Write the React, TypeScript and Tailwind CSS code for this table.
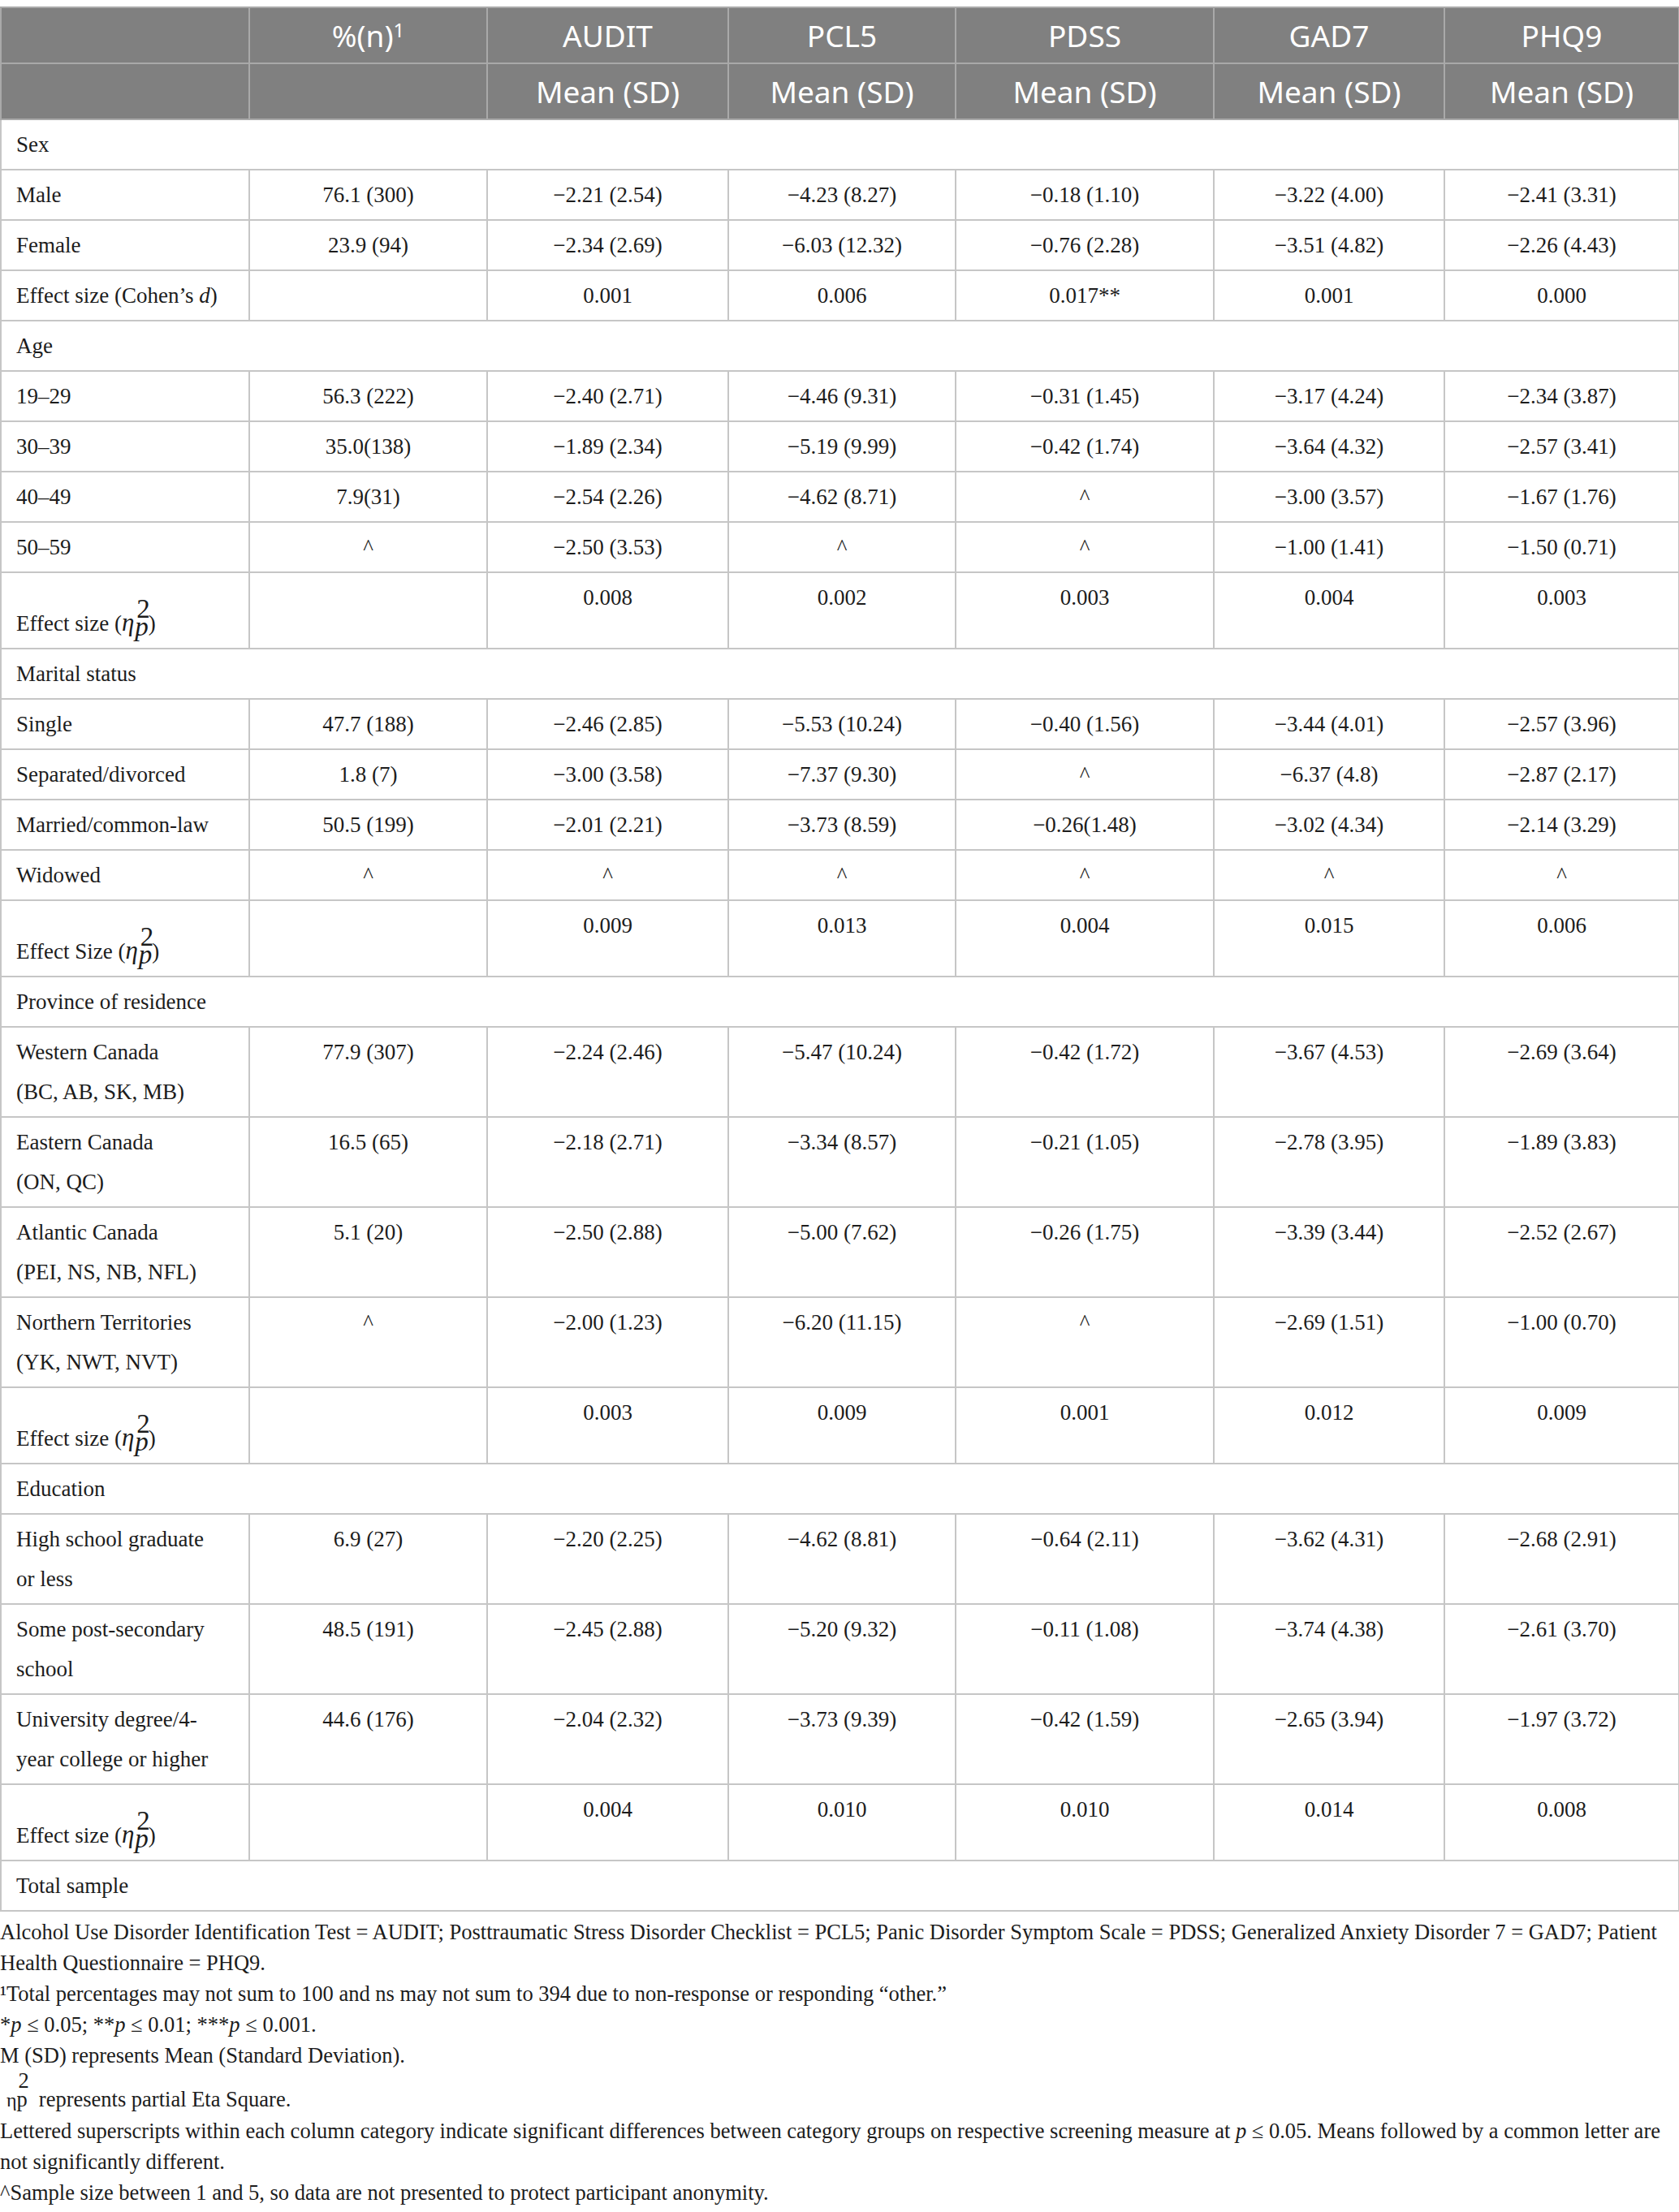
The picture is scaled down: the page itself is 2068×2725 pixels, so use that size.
const rows: any[] = [
  { section: "Sex" },
  { label: "Male", n: "76.1 (300)", v: ["−2.21 (2.54)", "−4.23 (8.27)", "−0.18 (1.10)", "−3.22 (4.00)", "−2.41 (3.31)"] },
  { label: "Female", n: "23.9 (94)", v: ["−2.34 (2.69)", "−6.03 (12.32)", "−0.76 (2.28)", "−3.51 (4.82)", "−2.26 (4.43)"] },
  { cohen: true, v: ["0.001", "0.006", "0.017**", "0.001", "0.000"] },
  { section: "Age" },
  { label: "19–29", n: "56.3 (222)", v: ["−2.40 (2.71)", "−4.46 (9.31)", "−0.31 (1.45)", "−3.17 (4.24)", "−2.34 (3.87)"] },
  { label: "30–39", n: "35.0(138)", v: ["−1.89 (2.34)", "−5.19 (9.99)", "−0.42 (1.74)", "−3.64 (4.32)", "−2.57 (3.41)"] },
  { label: "40–49", n: "7.9(31)", v: ["−2.54 (2.26)", "−4.62 (8.71)", "^", "−3.00 (3.57)", "−1.67 (1.76)"] },
  { label: "50–59", n: "^", v: ["−2.50 (3.53)", "^", "^", "−1.00 (1.41)", "−1.50 (0.71)"] },
  { eta: "Effect size", v: ["0.008", "0.002", "0.003", "0.004", "0.003"] },
  { section: "Marital status" },
  { label: "Single", n: "47.7 (188)", v: ["−2.46 (2.85)", "−5.53 (10.24)", "−0.40 (1.56)", "−3.44 (4.01)", "−2.57 (3.96)"] },
  { label: "Separated/divorced", n: "1.8 (7)", v: ["−3.00 (3.58)", "−7.37 (9.30)", "^", "−6.37 (4.8)", "−2.87 (2.17)"] },
  { label: "Married/common-law", n: "50.5 (199)", v: ["−2.01 (2.21)", "−3.73 (8.59)", "−0.26(1.48)", "−3.02 (4.34)", "−2.14 (3.29)"] },
  { label: "Widowed", n: "^", v: ["^", "^", "^", "^", "^"] },
  { eta: "Effect Size", v: ["0.009", "0.013", "0.004", "0.015", "0.006"] },
  { section: "Province of residence" },
  { label: "Western Canada", label2: "(BC, AB, SK, MB)", n: "77.9 (307)", v: ["−2.24 (2.46)", "−5.47 (10.24)", "−0.42 (1.72)", "−3.67 (4.53)", "−2.69 (3.64)"] },
  { label: "Eastern Canada", label2: "(ON, QC)", n: "16.5 (65)", v: ["−2.18 (2.71)", "−3.34 (8.57)", "−0.21 (1.05)", "−2.78 (3.95)", "−1.89 (3.83)"] },
  { label: "Atlantic Canada", label2: "(PEI, NS, NB, NFL)", n: "5.1 (20)", v: ["−2.50 (2.88)", "−5.00 (7.62)", "−0.26 (1.75)", "−3.39 (3.44)", "−2.52 (2.67)"] },
  { label: "Northern Territories", label2: "(YK, NWT, NVT)", n: "^", v: ["−2.00 (1.23)", "−6.20 (11.15)", "^", "−2.69 (1.51)", "−1.00 (0.70)"] },
  { eta: "Effect size", v: ["0.003", "0.009", "0.001", "0.012", "0.009"] },
  { section: "Education" },
  { label: "High school graduate", label2: "or less", n: "6.9 (27)", v: ["−2.20 (2.25)", "−4.62 (8.81)", "−0.64 (2.11)", "−3.62 (4.31)", "−2.68 (2.91)"] },
  { label: "Some post-secondary", label2: "school", n: "48.5 (191)", v: ["−2.45 (2.88)", "−5.20 (9.32)", "−0.11 (1.08)", "−3.74 (4.38)", "−2.61 (3.70)"] },
  { label: "University degree/4-", label2: "year college or higher", n: "44.6 (176)", v: ["−2.04 (2.32)", "−3.73 (9.39)", "−0.42 (1.59)", "−2.65 (3.94)", "−1.97 (3.72)"] },
  { eta: "Effect size", v: ["0.004", "0.010", "0.010", "0.014", "0.008"] },
  { section: "Total sample" },
];

const measures = ["AUDIT", "PCL5", "PDSS", "GAD7", "PHQ9"];

const td = "border-2 border-[#c6c6c6] px-[18px] pt-[6px] pb-[5px] align-top";
const th = "border-2 border-[#a9a9a9] bg-[#808080] text-white font-normal text-[37px] leading-[49px] py-[9px] text-center";

const Eta = () => (
  <>
    <span className="italic text-[31px]">η</span>
    <span className="relative inline-block italic text-[33px] leading-none top-[6px] ml-[1px]">
      p
      <span className="absolute left-[2px] bottom-[22px] not-italic text-[33px] leading-none">2</span>
    </span>
  </>
);

const App = () => {
  return (
    <div className="w-[2068px] bg-white pt-[8px] text-[#1c1c1c] font-['Liberation_Serif',serif]">
      <table className="table-fixed border-collapse w-[2067px] text-[27px] leading-[49px]">
        <colgroup>
          <col className="w-[306px]" />
          <col className="w-[293px]" />
          <col className="w-[297px]" />
          <col className="w-[280px]" />
          <col className="w-[318px]" />
          <col className="w-[284px]" />
          <col className="w-[289px]" />
        </colgroup>
        <thead className="font-['Noto_Sans','Open_Sans',sans-serif]">
          <tr>
            <th className={th}></th>
            <th className={th}>
              %(n)<span className="relative top-[-12px] text-[24px] leading-none">1</span>
            </th>
            {measures.map((m) => (
              <th key={m} className={th}>{m}</th>
            ))}
          </tr>
          <tr>
            <th className={th}></th>
            <th className={th}></th>
            {measures.map((m) => (
              <th key={m} className={th}>Mean (SD)</th>
            ))}
          </tr>
        </thead>
        <tbody>
          {rows.map((r, i) => {
            if (r.section)
              return (
                <tr key={i}>
                  <td colSpan={7} className={td}>{r.section}</td>
                </tr>
              );
            if (r.eta)
              return (
                <tr key={i} className="h-[94px]">
                  <td className="border-2 border-[#c6c6c6] px-[18px] pb-[5px] align-bottom whitespace-nowrap">
                    {r.eta} (<Eta />)
                  </td>
                  <td className={td}></td>
                  {r.v.map((v: string, j: number) => (
                    <td key={j} className={td + " text-center"}>{v}</td>
                  ))}
                </tr>
              );
            if (r.cohen)
              return (
                <tr key={i}>
                  <td className={td + " whitespace-nowrap"}>
                    Effect size (Cohen’s <span className="italic">d</span>)
                  </td>
                  <td className={td}></td>
                  {r.v.map((v: string, j: number) => (
                    <td key={j} className={td + " text-center"}>{v}</td>
                  ))}
                </tr>
              );
            return (
              <tr key={i}>
                <td className={td}>
                  {r.label}
                  {r.label2 && (
                    <>
                      <br />
                      {r.label2}
                    </>
                  )}
                </td>
                <td className={td + " text-center"}>{r.n}</td>
                {r.v.map((v: string, j: number) => (
                  <td key={j} className={td + " text-center"}>{v}</td>
                ))}
              </tr>
            );
          })}
        </tbody>
      </table>

      <div className="mt-[6px] text-[26.5px] leading-[38px] pb-[10px]">
        <p>
          Alcohol Use Disorder Identification Test = AUDIT; Posttraumatic Stress Disorder Checklist = PCL5; Panic Disorder Symptom Scale = PDSS; Generalized Anxiety Disorder 7 = GAD7; Patient Health Questionnaire = PHQ9.
        </p>
        <p>¹Total percentages may not sum to 100 and ns may not sum to 394 due to non-response or responding “other.”</p>
        <p>
          *<span className="italic">p</span> ≤ 0.05; **<span className="italic">p</span> ≤ 0.01; ***<span className="italic">p</span> ≤ 0.001.
        </p>
        <p>M (SD) represents Mean (Standard Deviation).</p>
        <p className="mt-[16px]">
          <span className="ml-[8px] text-[24px]">η</span>
          <span className="relative inline-block leading-none">
            p
            <span className="absolute left-[2px] bottom-[23px] leading-none">2</span>
          </span>
          <span className="ml-[14px]">represents partial Eta Square.</span>
        </p>
        <p>
          Lettered superscripts within each column category indicate significant differences between category groups on respective screening measure at <span className="italic">p</span> ≤ 0.05. Means followed by a common letter are not significantly different.
        </p>
        <p>^Sample size between 1 and 5, so data are not presented to protect participant anonymity.</p>
      </div>
    </div>
  );
};

export default App;
